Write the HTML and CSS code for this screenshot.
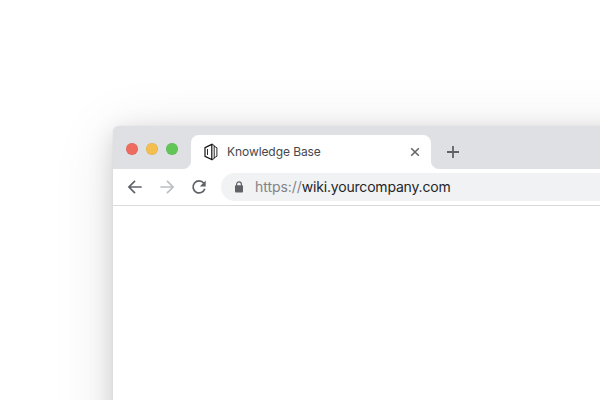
FILE: index.html
```html
<!DOCTYPE html>
<html lang="en">
<head>
<meta charset="utf-8">
<title>Knowledge Base</title>
<link rel="stylesheet" href="styles.css">
</head>
<body>
<main class="window">
  <header class="tab-strip">
    <div class="controls">
      <span class="control close-window"></span>
      <span class="control minimize"></span>
      <span class="control maximize"></span>
    </div>
    <div class="tab">
      <svg class="favicon" viewBox="0 0 16 18" fill="none" stroke="#111">
        <path stroke-width="1.2" d="M8.8 1.4 2 4.7v8.6l6.8 3.3z"/>
        <path stroke-width=".9" d="M4.5 6v6M8.8 1.4l2.4 1v13.2l-2.4 1M11.2 3.3l2.7 1.4v8.6l-2.7 1.4"/>
      </svg>
      <span class="tab-title">Knowledge Base</span>
      <svg class="tab-close" viewBox="0 0 10 10"><path d="m1.2 1.2 7.6 7.6m0-7.6L1.2 8.8"/></svg>
    </div>
    <svg class="new-tab" viewBox="0 0 14 14"><path d="M7 1v12M1 7h12"/></svg>
  </header>
  <nav class="toolbar">
    <svg class="nav-icon" viewBox="0 0 16 16"><path d="M14.7 8H2.2M8 1.9 1.9 8 8 14.1"/></svg>
    <svg class="nav-icon disabled" viewBox="0 0 16 16"><path d="M1.3 8h12.5M8 1.9 14.1 8 8 14.1"/></svg>
    <svg class="nav-icon" viewBox="0 0 16 16"><path d="M12.8 4.2A6 6 0 1 0 13.8 9.8"/><path class="solid" d="M14.7 1.4v6H8.8z"/></svg>
    <div class="address">
      <svg class="lock" viewBox="0 0 10 12"><path d="M2.6 5V3.3a2.4 2.4 0 0 1 4.8 0V5"/><rect x="1" y="4.3" width="8" height="7.2" rx="1"/></svg>
      <span class="url"><span class="scheme">https://</span>wiki.yourcompany.com</span>
    </div>
  </nav>
</main>
</body>
</html>
```

FILE: styles.css
```css
* { box-sizing: border-box; }
body {
  margin: 0;
  height: 400px;
  overflow: hidden;
  padding: 126px 0 0 113px;
  background: #fff;
  font-family: Inter, "Liberation Sans", sans-serif;
}
.window {
  width: 900px;
  height: 600px;
  overflow: hidden;
  border-radius: 6px;
  background: #fff;
  box-shadow: 0 0 1px rgba(0, 0, 0, .18), 0 6px 24px rgba(0, 0, 0, .15), 0 10px 64px rgba(0, 0, 0, .11);
}
.tab-strip {
  display: flex;
  height: 43px;
  background: #dfe0e4;
}
.controls {
  display: flex;
  gap: 8px;
  width: 78px;
  padding: 17px 0 0 13px;
}
.control {
  width: 12px;
  height: 12px;
  border-radius: 50%;
  box-shadow: inset 0 0 0 .5px rgba(0, 0, 0, .1);
}
.close-window { background: #ed6b5f; }
.minimize { background: #f5bf4f; }
.maximize { background: #62c656; }
.tab {
  position: relative;
  display: flex;
  align-items: center;
  width: 240px;
  height: 34px;
  margin-top: 9px;
  padding: 0 11px 0 12px;
  border-radius: 8px 8px 0 0;
  background: #fff;
}
.tab::before,
.tab::after {
  content: "";
  position: absolute;
  bottom: 0;
  width: 8px;
  height: 8px;
}
.tab::before {
  right: 100%;
  background: radial-gradient(circle at 0 0, transparent 7.5px, #fff 8.5px);
}
.tab::after {
  left: 100%;
  background: radial-gradient(circle at 100% 0, transparent 7.5px, #fff 8.5px);
}
.favicon {
  width: 16px;
  height: 18px;
  margin-right: 8px;
}
.tab-title {
  flex: 1;
  color: #45484c;
  font-size: 12px;
  line-height: 16px;
  letter-spacing: -.08px;
}
.tab-close {
  width: 10px;
  height: 10px;
  stroke: #5f6368;
  stroke-width: 1.5;
}
.new-tab {
  width: 14px;
  height: 14px;
  margin: 19px 0 0 15px;
  stroke: #5f6368;
  stroke-width: 1.8;
}
.toolbar {
  display: flex;
  align-items: center;
  gap: 16px;
  height: 37px;
  padding-left: 14px;
  border-bottom: 1px solid #d9dadc;
}
.nav-icon {
  width: 16px;
  height: 16px;
  fill: none;
  stroke: #5f6368;
  stroke-width: 1.7;
}
.disabled { stroke: #bdbfc1; }
.solid {
  fill: #5f6368;
  stroke: none;
}
.address {
  display: flex;
  align-items: center;
  flex: 1;
  height: 28px;
  margin-left: -2px;
  padding-left: 13px;
  border-radius: 14px 0 0 14px;
  background: #f1f2f4;
}
.lock {
  width: 10px;
  height: 12px;
  margin-right: 11px;
  fill: none;
  stroke: #5f6368;
  stroke-width: 1.2;
}
.lock rect {
  fill: #5f6368;
  stroke: none;
}
.url {
  color: #232529;
  font-size: 14px;
  line-height: 20px;
  letter-spacing: -.19px;
}
.scheme {
  color: #808387;
  letter-spacing: -.05px;
}
```
